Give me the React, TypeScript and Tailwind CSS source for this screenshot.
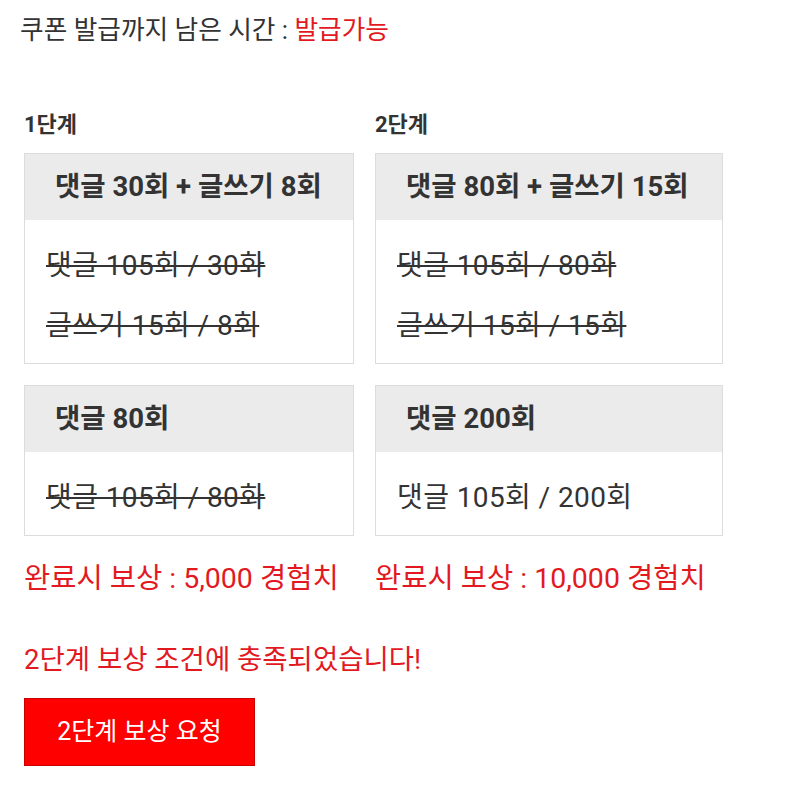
const font = { fontFamily: 'Roboto, "Noto Sans CJK KR", sans-serif' };

type Box = { title: string; lines: { text: string; done: boolean }[]; width: string };

function MissionBox({ box }: { box: Box }) {
  return (
    <div className={`${box.width} border border-[#dcdcdc] bg-white`}>
      <div className="flex h-[66px] items-center bg-[#ebebeb] pl-[30px] text-[27.5px] font-bold text-[#333]">
        {box.title}
      </div>
      <div className="flex flex-col gap-[24px] px-[21px] pt-[28px] pb-[19px]">
        {box.lines.map((l) => (
          <div
            key={l.text}
            className={`text-[28px] leading-[36px] tracking-[0.4px] text-[#333] ${l.done ? "line-through decoration-[2px] decoration-[#333]" : ""}`}
          >
            {l.text}
          </div>
        ))}
      </div>
    </div>
  );
}

const stage1: Box[] = [
  {
    title: "댓글 30회 + 글쓰기 8회",
    width: "w-[330px]",
    lines: [
      { text: "댓글 105회 / 30화", done: true },
      { text: "글쓰기 15회 / 8회", done: true },
    ],
  },
  {
    title: "댓글 80회",
    width: "w-[330px]",
    lines: [{ text: "댓글 105회 / 80화", done: true }],
  },
];

const stage2: Box[] = [
  {
    title: "댓글 80회 + 글쓰기 15회",
    width: "w-[348px]",
    lines: [
      { text: "댓글 105회 / 80화", done: true },
      { text: "글쓰기 15회 / 15회", done: true },
    ],
  },
  {
    title: "댓글 200회",
    width: "w-[348px]",
    lines: [{ text: "댓글 105회 / 200회", done: false }],
  },
];

function Stage({ label, boxes, reward }: { label: string; boxes: Box[]; reward: string }) {
  return (
    <div className="flex flex-col">
      <div className="mb-[13px] text-[22px] font-bold leading-[30px] text-[#333]">{label}</div>
      <div className="flex flex-col gap-[21px]">
        {boxes.map((b) => (
          <MissionBox key={b.title} box={b} />
        ))}
      </div>
      <div className="mt-[25px] whitespace-nowrap text-[28.5px] leading-[36px] text-[#e2191f]">{reward}</div>
    </div>
  );
}

export default function App() {
  return (
    <div className="min-h-[786px] w-[800px] bg-white px-[24px] pt-[12px]" style={font}>
      <div className="-ml-[4px] text-[25.7px] leading-[36px] text-[#333]">
        쿠폰 발급까지 남은 시간 : <span className="text-[#e2191f]">발급가능</span>
      </div>
      <div className="mt-[62px] flex gap-[21px]">
        <Stage label="1단계" boxes={stage1} reward="완료시 보상 : 5,000 경험치" />
        <Stage label="2단계" boxes={stage2} reward="완료시 보상 : 10,000 경험치" />
      </div>
      <div className="mt-[45px] text-[27.5px] leading-[36px] text-[#e2191f]">
        2단계 보상 조건에 충족되었습니다!
      </div>
      <button className="mt-[20px] flex h-[68px] w-[231px] items-center justify-center border border-[#c80000] bg-[#ff0000] text-[25px] text-white">
        2단계 보상 요청
      </button>
    </div>
  );
}
